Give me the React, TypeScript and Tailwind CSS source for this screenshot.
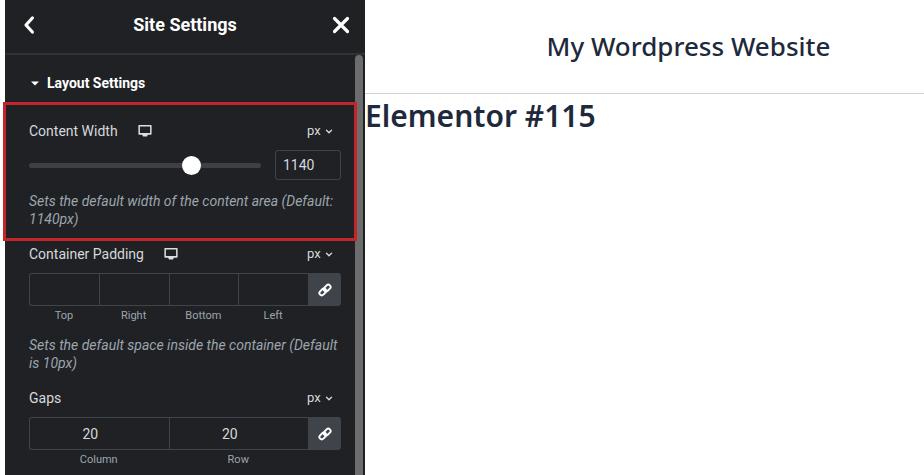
import { useState } from 'react';

interface ControlHeaderProps {
  id: string;
  label: string;
  htmlFor?: string;
  responsive?: boolean;
}

interface DimensionsProps {
  name: string;
  fields: { label: string; value: string }[];
}

function DesktopIcon() {
  return (
    <svg viewBox="0 0 14 12" className="w-3.5 h-3" aria-hidden="true">
      <path
        fillRule="evenodd"
        fill="#dcdfe2"
        d="M1 0h12q0.6 0 0.6 0.6v8.3q0 0.8-0.8 0.8H9.8L9 11.6H5L4.2 9.7H1.2q-0.8 0-0.8-0.8V0.6Q0.4 0 1 0zM1.9 1.5v6.6h10.2V1.5z"
      />
    </svg>
  );
}

function LinkIcon() {
  return (
    <svg viewBox="0 0 14 14" className="w-3.5 h-3.5" aria-hidden="true">
      <g fill="none" stroke="#fff" strokeWidth="1.9" transform="rotate(-45 7 7)">
        <rect x="0.3" y="4.5" width="7.6" height="4.6" rx="2.3" />
        <rect x="6.1" y="4.9" width="7.6" height="4.6" rx="2.3" />
      </g>
    </svg>
  );
}

function ControlHeader({ id, label, htmlFor, responsive }: ControlHeaderProps) {
  return (
    <div className="flex items-center h-5">
      <label htmlFor={htmlFor} className="text-sm text-[#d5d8dc]">
        {label}
      </label>
      {responsive && (
        <button type="button" aria-label="Desktop" className="ml-5">
          <DesktopIcon />
        </button>
      )}
      <div className="relative ml-auto mr-2">
        <select
          id={`${id}-unit`}
          aria-label={`${label} unit`}
          className="block w-[26px] appearance-none bg-transparent text-[13px] leading-5 text-[#d5d8dc]"
        >
          <option>px</option>
          <option>%</option>
          <option>em</option>
        </select>
        <svg viewBox="0 0 8 6" className="absolute right-0 top-2 w-2 h-1.5 pointer-events-none" aria-hidden="true">
          <path d="M1.5 1.2 4 3.7l2.5-2.5" fill="none" stroke="#d5d8dc" strokeWidth="1.4" strokeLinecap="round" strokeLinejoin="round" />
        </svg>
      </div>
    </div>
  );
}

function Description({ children }: { children: React.ReactNode }) {
  return <p className="mt-3 text-sm leading-[18px] italic text-[#9da5ae]">{children}</p>;
}

function Dimensions({ name, fields }: DimensionsProps) {
  return (
    <div className="flex items-start mt-[9px]">
      <div className="flex flex-1">
        {fields.map((field, index) => (
          <div key={field.label} className="flex-1 min-w-0 flex flex-col-reverse">
            <label htmlFor={`${name}-${field.label}`} className="mt-0.5 text-center text-[11px] leading-4 text-[#9da5ae]">
              {field.label}
            </label>
            <input
              id={`${name}-${field.label}`}
              defaultValue={field.value}
              className={`w-full h-[33px] pr-[18px] border-y border-l border-[#3f444b] bg-transparent text-center text-sm text-[#d5d8dc] ${
                index === 0 ? 'rounded-l-[3px]' : ''
              }`}
            />
          </div>
        ))}
      </div>
      <button
        type="button"
        aria-label="Link values together"
        className="w-[33px] h-[33px] flex items-center justify-center rounded-r-[3px] bg-[#3f444b]"
      >
        <LinkIcon />
      </button>
    </div>
  );
}

function SettingsPanel() {
  const [width, setWidth] = useState('1140');

  return (
    <aside className="w-90 shrink-0 flex flex-col bg-[#1f2124] font-['Roboto',sans-serif]">
      <header className="h-[55px] shrink-0 flex items-center justify-between px-4 pb-1 border-b-2 border-[#303236]">
        <button type="button" aria-label="Back">
          <svg viewBox="0 0 16 20" className="w-4 h-5" aria-hidden="true">
            <path d="M11.4 3 5 10l6.4 7" fill="none" stroke="#fff" strokeWidth="3.2" strokeLinecap="round" strokeLinejoin="round" />
          </svg>
        </button>
        <h1 className="text-lg font-bold text-white">Site Settings</h1>
        <button type="button" aria-label="Close">
          <svg viewBox="0 0 16 20" className="w-4 h-5 overflow-visible" aria-hidden="true">
            <path d="M1.5 3.5l13 13M14.5 3.5l-13 13" fill="none" stroke="#fff" strokeWidth="3.2" strokeLinecap="round" />
          </svg>
        </button>
      </header>

      <div className="flex flex-1 min-h-0">
        <div className="flex-1 min-w-0 pl-6 pr-3.5">
          <button type="button" className="flex items-center gap-2 mt-[18px] ml-0.5 h-5 text-sm font-bold text-white">
            <svg viewBox="0 0 8 5" className="w-2 h-[5px]" aria-hidden="true">
              <path d="M0 0.5h8L4 4.5z" fill="currentColor" />
            </svg>
            Layout Settings
          </button>

          <section className="relative mt-7">
            <ControlHeader id="content-width" label="Content Width" htmlFor="content-width" responsive />
            <div className="flex items-center gap-3.5 mt-[9px]">
              <input
                type="range"
                aria-label="Content width slider"
                min={300}
                max={1470}
                value={width}
                onChange={(e) => setWidth(e.target.value)}
                className="flex-1 min-w-0 h-[5px] appearance-none rounded-full bg-[#3f4044] [&::-webkit-slider-thumb]:appearance-none [&::-webkit-slider-thumb]:w-[19px] [&::-webkit-slider-thumb]:h-[19px] [&::-webkit-slider-thumb]:rounded-full [&::-webkit-slider-thumb]:bg-white"
              />
              <input
                id="content-width"
                value={width}
                onChange={(e) => setWidth(e.target.value)}
                className="w-[66px] h-[30px] px-[7px] rounded-[3px] border border-[#3f444b] bg-transparent text-sm text-[#d5d8dc]"
              />
            </div>
            <Description>Sets the default width of the content area (Default: 1140px)</Description>
            <div className="absolute z-10 -top-[19px] -bottom-[13px] -left-[26px] -right-4 border-3 border-[#c4252b] pointer-events-none" />
          </section>

          <section className="mt-4">
            <ControlHeader id="padding" label="Container Padding" htmlFor="padding-Top" responsive />
            <Dimensions
              name="padding"
              fields={[
                { label: 'Top', value: '' },
                { label: 'Right', value: '' },
                { label: 'Bottom', value: '' },
                { label: 'Left', value: '' },
              ]}
            />
            <Description>Sets the default space inside the container (Default is 10px)</Description>
          </section>

          <section className="mt-4">
            <ControlHeader id="gaps" label="Gaps" htmlFor="gaps-Column" />
            <Dimensions
              name="gaps"
              fields={[
                { label: 'Column', value: '20' },
                { label: 'Row', value: '20' },
              ]}
            />
          </section>
        </div>

        {/* scrollbar thumb */}
        <div className="w-2 mr-0.5 rounded-t-full bg-[#6c6c6c]" />
      </div>
    </aside>
  );
}

export default function App() {
  return (
    <div className="flex h-screen overflow-hidden bg-white pl-[5px]">
      <SettingsPanel />
      <main className="flex-1 min-w-0 font-['Noto_Sans',sans-serif] text-[#1e2a3b]">
        <header className="h-[94px] flex items-center justify-center pl-22 pb-0.5 border-b border-[#cfd1d4]">
          <p className="text-[26px] leading-9 font-medium whitespace-nowrap">My Wordpress Website</p>
        </header>
        <h2 className="text-[30px] leading-[44px] font-semibold">Elementor #115</h2>
      </main>
    </div>
  );
}
